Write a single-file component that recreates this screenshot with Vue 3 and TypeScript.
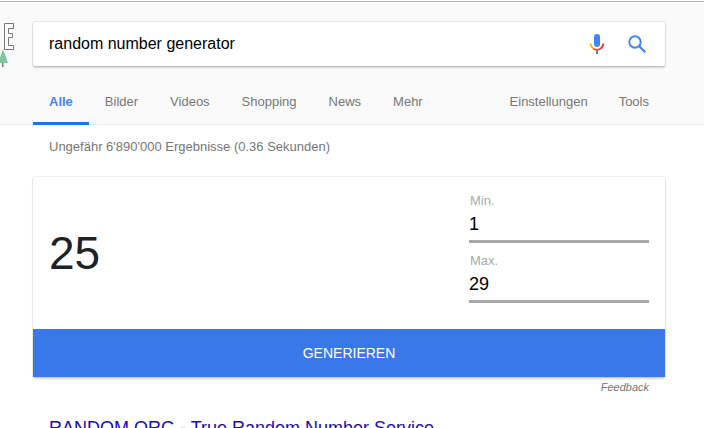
<template>
  <div class="page">
    <div class="top-line"></div>
    <header class="head">
      <div class="head-row">
        <div class="logo-slot">
          <svg class="logo" width="16" height="46" viewBox="0 0 16 46">
            <path d="M4.5 1.5H13.5V6.5H8.5V11.5H12.5V15.5H8.5V23.5H13.5V27.5H4.5Z" fill="none" stroke="#777" stroke-width="1" />
            <path d="M3 27L8 41H-2Z" fill="#7fc8a0" />
            <rect x="2" y="41" width="1.5" height="4" fill="#777" />
          </svg>
        </div>
        <div class="search-box">
          <span class="query">random number generator</span>
          <svg class="mic" width="16" height="22" viewBox="0 0 16 22">
            <rect x="5" y="1" width="6" height="13" rx="3" fill="#4285f4" />
            <path d="M1.7 10.5A6.3 6.3 0 0 0 4.5 15.7" fill="none" stroke="#fbbc05" stroke-width="1.8" />
            <path d="M4.5 15.7A6.3 6.3 0 0 0 14.3 10.5" fill="none" stroke="#ea4335" stroke-width="1.8" />
            <rect x="7" y="17.5" width="2" height="3.5" fill="#34a853" />
          </svg>
          <svg class="lens" width="18" height="18" viewBox="0 0 18 18">
            <circle cx="7" cy="7" r="5.7" fill="none" stroke="#4285f4" stroke-width="2" />
            <path d="M11 11L17.2 17.2" stroke="#4285f4" stroke-width="2.2" />
          </svg>
        </div>
      </div>
      <nav class="tabs">
        <a v-for="tab in leftTabs" :key="tab" class="tab" :class="{ active: tab === 'Alle' }">{{ tab }}</a>
        <span class="spacer"></span>
        <a v-for="tab in rightTabs" :key="tab" class="tab">{{ tab }}</a>
      </nav>
    </header>
    <main class="content">
      <div class="stats">Ungefähr 6'890'000 Ergebnisse (0.36 Sekunden)</div>
      <section class="card">
        <div class="card-body">
          <div class="result">{{ result }}</div>
          <div class="fields">
            <div v-for="field in fields" :key="field.label" class="field">
              <div class="field-label">{{ field.label }}</div>
              <div class="field-value">{{ field.value }}</div>
            </div>
          </div>
        </div>
        <button class="generate">GENERIEREN</button>
      </section>
      <div class="feedback">Feedback</div>
      <a class="link">RANDOM.ORG - True Random Number Service</a>
    </main>
  </div>
</template>

<script setup lang="ts">
const leftTabs = ['Alle', 'Bilder', 'Videos', 'Shopping', 'News', 'Mehr']
const rightTabs = ['Einstellungen', 'Tools']
const result = 25
const fields = [
  { label: 'Min.', value: 1 },
  { label: 'Max.', value: 29 }
]
</script>

<style>
html,
body {
  margin: 0;
  height: 100%;
  overflow: hidden;
  background: #fff;
}
</style>

<style scoped>
.page {
  width: 704px;
  height: 428px;
  overflow: hidden;
  font-family: "Liberation Sans", Arial, sans-serif;
  background: #fff;
}

.top-line {
  height: 1px;
  margin-top: 1px;
  background: #b4b4b4;
}

.head {
  height: 122px;
  background: #fafafa;
  border-bottom: 1px solid #ebebeb;
  box-sizing: content-box;
}

.head-row {
  display: flex;
  padding-top: 20px;
}

.logo-slot {
  width: 33px;
  height: 45px;
}

.logo {
  display: block;
}

.search-box {
  width: 632px;
  height: 44px;
  background: #fff;
  border-radius: 2px;
  box-shadow: 0 2px 2px 0 rgba(0, 0, 0, 0.16), 0 0 0 1px rgba(0, 0, 0, 0.08);
  display: flex;
  align-items: center;
  padding-left: 16px;
  box-sizing: border-box;
}

.query {
  flex: 1;
  font-size: 16px;
  color: #000;
}

.mic {
  margin-right: 23px;
}

.lens {
  margin-right: 19px;
}

.tabs {
  display: flex;
  height: 58px;
  padding-left: 33px;
  width: 616px;
  box-sizing: content-box;
}

.tab {
  font-size: 13px;
  color: #777;
  height: 58px;
  line-height: 69px;
  margin-right: 32px;
  box-sizing: border-box;
}

.tab:first-child {
  padding: 0 16px;
  margin-right: 16px;
}

.tab:nth-last-child(2) {
  margin-right: 31px;
}

.tab:last-child {
  margin-right: 0;
}

.tab.active {
  color: #4285f4;
  font-weight: bold;
  border-bottom: 3px solid #1a73e8;
}

.spacer {
  flex: 1;
}

.content {
  padding-left: 33px;
  width: 632px;
}

.stats {
  font-size: 13px;
  color: #777;
  padding: 14px 0 0 16px;
  line-height: 15px;
}

.card {
  margin-top: 23px;
  background: #fff;
  border-radius: 2px;
  box-shadow: 0 2px 2px 0 rgba(0, 0, 0, 0.16), 0 0 0 1px rgba(0, 0, 0, 0.06);
}

.card-body {
  height: 152px;
  display: flex;
  align-items: flex-start;
  justify-content: space-between;
  padding: 0 16px;
}

.result {
  font-size: 46px;
  line-height: 54px;
  color: #202124;
  margin-top: 49px;
}

.fields {
  width: 180px;
  padding-top: 16px;
}

.field {
  height: 60px;
}

.field-label {
  font-size: 13px;
  color: #aaa;
  line-height: 15px;
  padding-left: 1px;
}

.field-value {
  font-size: 18px;
  color: #000;
  line-height: 24px;
  margin-top: 4px;
  padding-bottom: 4px;
  border-bottom: 3px solid #a8a8a8;
}

.generate {
  display: block;
  width: 100%;
  height: 48px;
  border: 0;
  padding: 0 0 1px;
  background: #3b78e7;
  color: #fff;
  font-family: "Liberation Sans", sans-serif;
  font-size: 14px;
}

.feedback {
  font-size: 11px;
  font-style: italic;
  color: #777;
  text-align: right;
  padding: 4px 16px 0 0;
  line-height: 13px;
}

.link {
  display: block;
  margin: 23px 0 0 16px;
  font-size: 18px;
  line-height: 22px;
  color: #1a0dab;
  white-space: nowrap;
}
</style>
